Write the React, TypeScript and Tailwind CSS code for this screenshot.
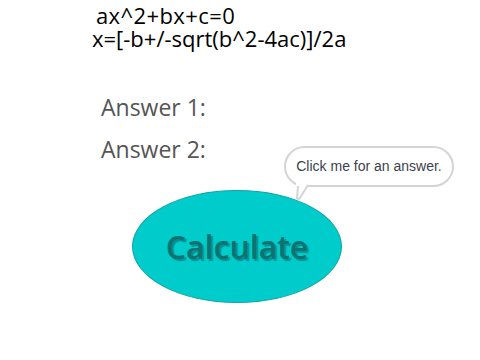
export default function App() {
  return (
    <div className="relative w-[480px] h-[360px] bg-white overflow-hidden" style={{ fontFamily: '"Open Sans", sans-serif' }}>
      <div className="pt-[4px] pl-[92px] text-[22px] leading-[23px] text-black">
        <div className="pl-[4px] tracking-[0.4px]">ax^2+bx+c=0</div>
        <div>x=[-b+/-sqrt(b^2-4ac)]/2a</div>
      </div>
      <div className="pl-[101px] pt-[42px] flex flex-col gap-[12px] text-[23px] leading-[30px] text-[#555]">
        <div>Answer 1:</div>
        <div>Answer 2:</div>
      </div>
      <div className="pl-[132px] pt-[26px]">
        <button className="w-[210px] h-[113px] rounded-[50%] bg-[#00cccc] border border-[#12a5a5] flex items-center justify-center text-[32px] font-semibold text-[#0e7272] [text-shadow:2px_2px_1px_#0a8f8f]" style={{ fontFamily: '"Open Sans", sans-serif' }}>
          Calculate
        </button>
      </div>
      <div className="absolute left-[284px] top-[146px]">
        <div className="relative h-[41px] w-[170px] rounded-[21px] border-2 border-[#d4d4d4] bg-white flex items-center justify-center text-[14px] text-[#3b3f4e]" style={{ fontFamily: '"Liberation Sans", Arial, sans-serif' }}>
          Click me for an answer.
        </div>
        <svg className="absolute left-[8px] top-[36px]" width="30" height="20" viewBox="0 0 30 20">
          <path d="M4 1 L16 1 L8 17 Q6 18 5 16 Z" fill="white" />
          <path d="M16 3 L8 16 Q6 18 5 16 L6 4" fill="none" stroke="#d4d4d4" strokeWidth="2" />
        </svg>
      </div>
    </div>
  );
}
